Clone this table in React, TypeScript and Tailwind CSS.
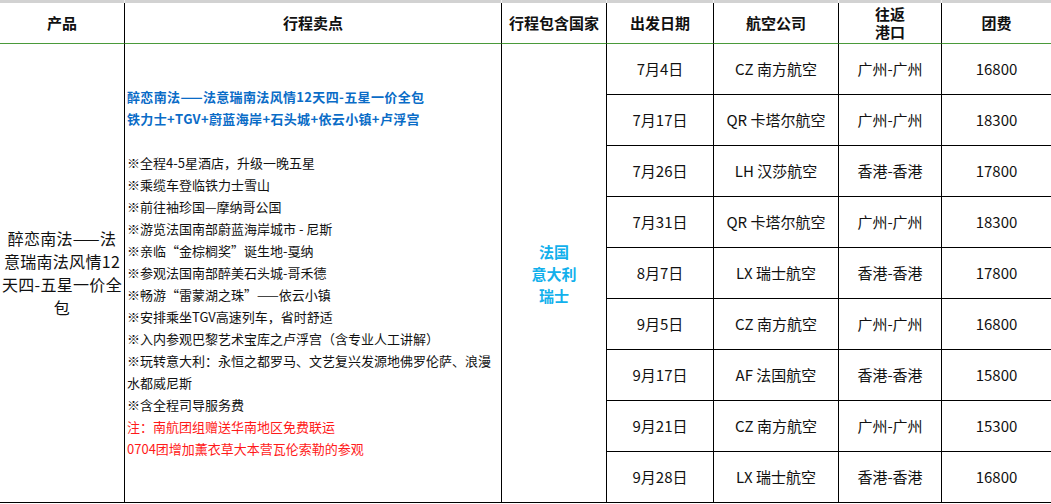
import React from 'react';

const departures = [
  { date: '7月4日', airline: 'CZ 南方航空', port: '广州-广州', price: '16800' },
  { date: '7月17日', airline: 'QR 卡塔尔航空', port: '广州-广州', price: '18300' },
  { date: '7月26日', airline: 'LH 汉莎航空', port: '香港-香港', price: '17800' },
  { date: '7月31日', airline: 'QR 卡塔尔航空', port: '广州-广州', price: '18300' },
  { date: '8月7日', airline: 'LX 瑞士航空', port: '香港-香港', price: '17800' },
  { date: '9月5日', airline: 'CZ 南方航空', port: '广州-广州', price: '16800' },
  { date: '9月17日', airline: 'AF 法国航空', port: '香港-香港', price: '15800' },
  { date: '9月21日', airline: 'CZ 南方航空', port: '广州-广州', price: '15300' },
  { date: '9月28日', airline: 'LX 瑞士航空', port: '香港-香港', price: '16800' },
];

const highlights = [
  '※全程4-5星酒店，升级一晚五星',
  '※乘缆车登临铁力士雪山',
  '※前往袖珍国—摩纳哥公国',
  '※游览法国南部蔚蓝海岸城市 - 尼斯',
  '※亲临“金棕榈奖”诞生地-戛纳',
  '※参观法国南部醉美石头城-哥禾德',
  '※畅游“雷蒙湖之珠”——依云小镇',
  '※安排乘坐TGV高速列车，省时舒适',
  '※入内参观巴黎艺术宝库之卢浮宫（含专业人工讲解）',
  '※玩转意大利：永恒之都罗马、文艺复兴发源地佛罗伦萨、浪漫',
  '水都威尼斯',
  '※含全程司导服务费',
];

const headCell = 'flex items-center justify-center border-r border-r-black border-b border-b-[#4a9a3a] text-[15px] font-bold text-[#111] text-center';
const bodyCell = 'flex items-center justify-center border-r border-b border-black text-[15px] text-[#111] whitespace-nowrap';

export default function App() {
  return (
    <div className="w-[1051px] h-[504px] overflow-hidden bg-white font-['Noto_Sans_CJK_SC',sans-serif]">
      {/* sheet top strip */}
      <div className="grid grid-cols-[125px_377px_105px_107px_125px_103px_109px] h-[3px] bg-[#d2d2d2]">
        <div className="border-r border-[#ececec]" />
        <div className="border-r border-[#ececec]" />
        <div className="border-r border-[#ececec]" />
        <div className="border-r border-[#ececec]" />
        <div className="border-r border-[#ececec]" />
        <div className="border-r border-[#ececec]" />
        <div />
      </div>

      <div className="grid grid-cols-[125px_377px_105px_107px_125px_103px_109px] grid-rows-[41px_repeat(9,51px)]">
        <div className={headCell}>产品</div>
        <div className={headCell}>行程卖点</div>
        <div className={headCell}>行程包含国家</div>
        <div className={headCell}>出发日期</div>
        <div className={headCell}>航空公司</div>
        <div className={`${headCell} leading-[18px]`}>
          <p>
            往返
            <br />
            港口
          </p>
        </div>
        <div className={`${headCell} border-r-0`}>团费</div>

        <div className="row-start-2 row-span-9 col-start-1 flex items-center justify-center border-r border-b border-black text-[16px] leading-[23px] text-[#111] text-center whitespace-nowrap tracking-[0.3px]">
          <p>
            醉恋南法——法<br />
            意瑞南法风情12<br />
            天四-五星一价全<br />
            包
          </p>
        </div>

        <div className="row-start-2 row-span-9 col-start-2 flex items-center border-r border-b border-black pl-[2px] text-[13px] leading-[22px] whitespace-nowrap">
          <div>
            <p className="font-bold text-[#0a6cc7] tracking-[0.35px]">醉恋南法——法意瑞南法风情12天四-五星一价全包</p>
            <p className="font-bold text-[#0a6cc7] tracking-[0.35px]">铁力士+TGV+蔚蓝海岸+石头城+依云小镇+卢浮宫</p>
            <p className="h-[22px]" />
            {highlights.map((line) => (
              <p key={line} className="text-[#111]">{line}</p>
            ))}
            <p className="text-[#ff1a1a]">注：南航团组赠送华南地区免费联运</p>
            <p className="text-[#ff1a1a]">0704团增加薰衣草大本营瓦伦索勒的参观</p>
          </div>
        </div>

        <div className="row-start-2 row-span-9 col-start-3 flex flex-col items-center justify-center border-r border-b border-black text-[15px] leading-[22px] font-bold text-[#12b0ec] pt-[2px]">
          <span>法国</span>
          <span>意大利</span>
          <span>瑞士</span>
        </div>

        {departures.map((d, i) => (
          <React.Fragment key={d.date}>
            <div className={`${bodyCell} col-start-4`} style={{ gridRowStart: i + 2 }}>{d.date}</div>
            <div className={`${bodyCell} col-start-5`} style={{ gridRowStart: i + 2 }}>{d.airline}</div>
            <div className={`${bodyCell} col-start-6`} style={{ gridRowStart: i + 2 }}>{d.port}</div>
            <div className={`${bodyCell} col-start-7 border-r-0`} style={{ gridRowStart: i + 2 }}>{d.price}</div>
          </React.Fragment>
        ))}
      </div>
    </div>
  );
}
